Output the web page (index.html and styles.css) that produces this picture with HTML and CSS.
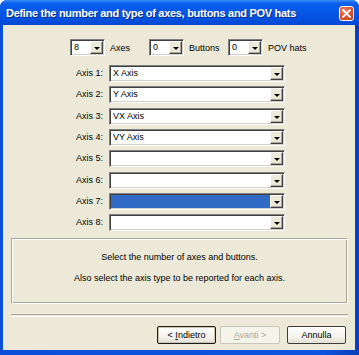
FILE: index.html
```html
<!DOCTYPE html>
<html lang="en">
<head>
    <meta charset="UTF-8">
    <title>Axes wizard</title>
    <link rel="stylesheet" href="styles.css">
</head>
<body>
    <div class="window">
        <div class="titlebar">
            <span class="title">Define the number and type of axes, buttons and POV hats</span>
            <span class="close">
                <svg width="9" height="9" viewBox="0 0 9 9"><path d="M1 1 L8 8 M8 1 L1 8" stroke="#fff" stroke-width="1.8" stroke-linecap="square"/></svg>
            </span>
        </div>

        <div class="client">
            <div class="counts">
                <div class="group">
                    <div class="combo small"><span class="val">8</span><span class="drop"></span></div>
                    <span class="lbl">Axes</span>
                </div>
                <div class="group">
                    <div class="combo small"><span class="val">0</span><span class="drop"></span></div>
                    <span class="lbl">Buttons</span>
                </div>
                <div class="group">
                    <div class="combo small"><span class="val">0</span><span class="drop"></span></div>
                    <span class="lbl">POV hats</span>
                </div>
            </div>

            <div class="axes">
                <label>Axis 1:</label>
                <div class="combo"><span class="val">X Axis</span><span class="drop"></span></div>
                <label>Axis 2:</label>
                <div class="combo"><span class="val">Y Axis</span><span class="drop"></span></div>
                <label>Axis 3:</label>
                <div class="combo"><span class="val">VX Axis</span><span class="drop"></span></div>
                <label>Axis 4:</label>
                <div class="combo"><span class="val">VY Axis</span><span class="drop"></span></div>
                <label>Axis 5:</label>
                <div class="combo"><span class="val"></span><span class="drop"></span></div>
                <label>Axis 6:</label>
                <div class="combo"><span class="val"></span><span class="drop"></span></div>
                <label>Axis 7:</label>
                <div class="combo selected"><span class="val"></span><span class="drop"></span></div>
                <label>Axis 8:</label>
                <div class="combo"><span class="val"></span><span class="drop"></span></div>
            </div>

            <div class="info">
                <p>Select the number of axes and buttons.</p>
                <p>Also select the axis type to be reported for each axis.</p>
            </div>

            <div class="sep"></div>

            <div class="buttons">
                <button class="btn focus">&lt; <u>I</u>ndietro</button>
                <button class="btn disabled"><u>A</u>vanti &gt;</button>
                <button class="btn cancel">Annulla</button>
            </div>
        </div>
    </div>
</body>
</html>
```

FILE: styles.css
```css
body {
    margin: 0;
    background-color: #fff;
    font-family: "Liberation Sans", Arial, sans-serif;
    font-size: 9px;
    color: #000;
}

.window {
    width: 359px;
    height: 355px;
    box-sizing: border-box;
    background: linear-gradient(to right, #0a4fd8 0, #0b55e0 90%, #0a3fb8 100%);
    border-radius: 7px 7px 0 0;
    display: flex;
    flex-direction: column;
    overflow: hidden;
}

.titlebar {
    height: 25px;
    flex: none;
    display: flex;
    align-items: center;
    padding-left: 6px;
    background: linear-gradient(#3d8ef9 0, #0c61ee 3px, #0557e6 45%, #044fde 80%, #0348d2 100%);
}

.title {
    flex: 1;
    color: #fff;
    font-weight: bold;
    font-size: 11px;
    letter-spacing: -0.3px;
    text-shadow: 1px 1px 0 #0a2f8a;
    white-space: nowrap;
}

.close {
    width: 15px;
    height: 15px;
    margin-right: 5px;
    margin-top: 1px;
    box-sizing: border-box;
    border: 1px solid #fff;
    border-radius: 3px;
    background: radial-gradient(circle at 35% 30%, #f08a6a 0, #e0552f 45%, #c03a17 100%);
    display: flex;
    align-items: center;
    justify-content: center;
}

.close svg {
    display: block;
}

.client {
    flex: 1;
    margin: 0 4px 5px 3px;
    background-color: #ece9d8;
    display: flex;
    flex-direction: column;
}

/* combo boxes */
.combo {
    height: 17px;
    box-sizing: border-box;
    background-color: #fff;
    border-top: 1px solid #808080;
    border-left: 1px solid #808080;
    border-right: 1px solid #fff;
    border-bottom: 1px solid #fff;
    box-shadow: inset 1px 1px 0 #404040, inset -1px -1px 0 #d4d0c8;
    display: flex;
    align-items: stretch;
    padding: 1px;
}

.combo .val {
    flex: 1;
    padding-left: 2px;
    line-height: 13px;
    white-space: nowrap;
    overflow: hidden;
}

.combo.selected .val {
    background-color: #316ac5;
}

.combo .drop {
    width: 13px;
    flex: none;
    box-sizing: border-box;
    background-color: #ece9d8;
    border-top: 1px solid #fff;
    border-left: 1px solid #fff;
    border-right: 1px solid #404040;
    border-bottom: 1px solid #404040;
    box-shadow: inset -1px -1px 0 #aca899;
    position: relative;
}

.combo .drop::after {
    content: "";
    position: absolute;
    left: 3px;
    top: 5px;
    border-left: 3px solid transparent;
    border-right: 3px solid transparent;
    border-top: 3px solid #000;
}

/* count row */
.counts {
    display: flex;
    margin-top: 14px;
    padding-left: 67px;
}

.group {
    display: flex;
    align-items: center;
    width: 79px;
}

.combo.small {
    width: 35px;
}

.lbl {
    margin-left: 5px;
}

/* axis list */
.axes {
    display: grid;
    grid-template-columns: 100px 176px;
    column-gap: 6px;
    row-gap: 4.33px;
    margin-top: 9px;
}

.axes label {
    text-align: right;
    line-height: 17px;
}

/* info box */
.info {
    margin: 7px 7px 0 8px;
    height: 66px;
    box-sizing: border-box;
    border-top: 1px solid #aca899;
    border-left: 1px solid #aca899;
    border-right: 1px solid #fff;
    border-bottom: 1px solid #fff;
    box-shadow: inset 1px 1px 0 #fff, inset -1px -1px 0 #aca899;
    text-align: center;
    padding-top: 12px;
}

.info p {
    margin: 0 0 9px 0;
    line-height: 12px;
}

.sep {
    margin: 10px 7px 0 8px;
    height: 1px;
    border-top: 1px solid #aca899;
    border-bottom: 1px solid #fff;
}

/* buttons */
.buttons {
    display: flex;
    justify-content: flex-end;
    margin-top: 9px;
    padding-right: 9px;
}

.btn {
    width: 59px;
    height: 18px;
    margin-left: 4px;
    padding: 0;
    font-family: "Liberation Sans", Arial, sans-serif;
    font-size: 9px;
    color: #000;
    background: linear-gradient(#fff 0, #f4f3ee 60%, #e3e0d2 100%);
    border: 1px solid #3c3c3c;
    border-radius: 2px;
}

.btn.focus {
    border-color: #1c1c1c;
    box-shadow: inset 0 0 0 1px #c8c4b0;
}

.btn.disabled {
    width: 60px;
    color: #aca899;
    border-color: #c9c7ba;
    background: #f5f4ea;
}

.btn.cancel {
    margin-left: 7px;
}
```
